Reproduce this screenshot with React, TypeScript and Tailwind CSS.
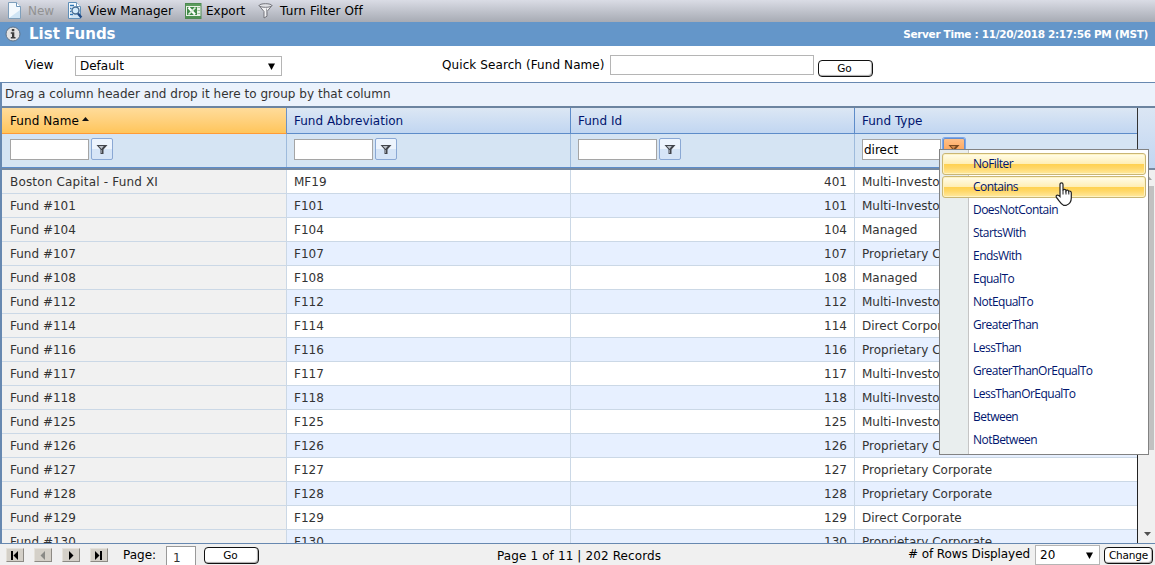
import type { ReactNode } from 'react';

const funds = [
  { name: 'Boston Capital - Fund XI', abbr: 'MF19', id: '401', type: 'Multi-Investor' },
  { name: 'Fund #101', abbr: 'F101', id: '101', type: 'Multi-Investor' },
  { name: 'Fund #104', abbr: 'F104', id: '104', type: 'Managed' },
  { name: 'Fund #107', abbr: 'F107', id: '107', type: 'Proprietary Corporate' },
  { name: 'Fund #108', abbr: 'F108', id: '108', type: 'Managed' },
  { name: 'Fund #112', abbr: 'F112', id: '112', type: 'Multi-Investor' },
  { name: 'Fund #114', abbr: 'F114', id: '114', type: 'Direct Corporate' },
  { name: 'Fund #116', abbr: 'F116', id: '116', type: 'Proprietary Corporate' },
  { name: 'Fund #117', abbr: 'F117', id: '117', type: 'Multi-Investor' },
  { name: 'Fund #118', abbr: 'F118', id: '118', type: 'Multi-Investor' },
  { name: 'Fund #125', abbr: 'F125', id: '125', type: 'Multi-Investor' },
  { name: 'Fund #126', abbr: 'F126', id: '126', type: 'Proprietary Corporate' },
  { name: 'Fund #127', abbr: 'F127', id: '127', type: 'Proprietary Corporate' },
  { name: 'Fund #128', abbr: 'F128', id: '128', type: 'Proprietary Corporate' },
  { name: 'Fund #129', abbr: 'F129', id: '129', type: 'Direct Corporate' },
  { name: 'Fund #130', abbr: 'F130', id: '130', type: 'Proprietary Corporate' },
];

const filterOptions = [
  'NoFilter',
  'Contains',
  'DoesNotContain',
  'StartsWith',
  'EndsWith',
  'EqualTo',
  'NotEqualTo',
  'GreaterThan',
  'LessThan',
  'GreaterThanOrEqualTo',
  'LessThanOrEqualTo',
  'Between',
  'NotBetween',
];

const columns = ['Fund Name', 'Fund Abbreviation', 'Fund Id', 'Fund Type'];
const gridCols = 'grid grid-cols-[285px_284px_284px_282px]';

function PageIcon({ search = false }: { search?: boolean }) {
  return (
    <svg width="16" height="17" viewBox="0 0 16 17" className="shrink-0">
      <path d="M1.500 .5h8l4 4v12h-12z" fill="#f4f9fd" stroke={search ? '#5f8fb8' : '#7f9fbb'} />
      <path d="M2 16h11V8z" fill="#cfe4f4" />
      <path d="M9.500.5v4h4" fill="#fff" stroke="#6f97ba" />
      {search && (
        <g>
          <path d="M3 3.500h4M3 6.500h1.500M3 9.500h1.500M3 12.500h3" stroke="#2f78b7" strokeWidth="1.300" />
          <circle cx="8.500" cy="8.500" r="3.500" fill="#d4ecfd" stroke="#4a6f94" strokeWidth="1.400" />
          <path d="M11 11.500l3.300 4" stroke="#1f4a86" strokeWidth="2.400" />
        </g>
      )}
    </svg>
  );
}

function ExcelIcon() {
  return (
    <svg width="17" height="16" viewBox="0 0 17 16" className="shrink-0">
      <rect x=".5" y=".5" width="15.500" height="15" fill="#e9f2e7" stroke="#4e8a52" />
      <path d="M12.500 4.500h2.500M12.500 7.500h2.500M12.500 10.500h2.500" stroke="#9cc39a" />
      <rect x="1" y="1" width="15" height="2" fill="#5c9c5e" />
      <path d="M2 4h10v8H2z" fill="#418a48" />
      <path d="M3.500 4.500l6.500 7" stroke="#fff" strokeWidth="2.400" />
      <path d="M10.500 4.500l-7 7" stroke="#d9ecd8" strokeWidth="1.700" />
      <path d="M1 14h15" stroke="#4f9154" strokeWidth="2" />
    </svg>
  );
}

function FunnelIcon() {
  return (
    <svg width="15" height="16" viewBox="0 0 15 16" className="shrink-0">
      <path d="M1 2.500L6 8.500V15l3-1.800V8.500l5-6z" fill="#f2f2f4" stroke="#74757c" />
      <ellipse cx="7.500" cy="2.500" rx="6.300" ry="1.800" fill="#e2e3e7" stroke="#74757c" />
      <path d="M8.500 5.500v7" stroke="#a4a5ab" />
    </svg>
  );
}

function FilterGlyph({ active = false }: { active?: boolean }) {
  return (
    <svg width="12" height="11" viewBox="0 0 12 11">
      <path d="M.5 1h11L7.500 5.500V10h-3V5.500z" fill={active ? '#7a4a20' : '#42454b'} />
      <path d="M2.800 2h5L5.500 5z" fill={active ? '#d58b4c' : '#bcc2ca'} />
      <path d="M5 6h1v3H5z" fill={active ? '#b9763d' : '#8d929a'} />
    </svg>
  );
}

function ToolItem({ icon, label, className }: { icon: ReactNode; label: string; className: string }) {
  return (
    <div className={`flex items-center ${className}`}>
      {icon}
      <span>{label}</span>
    </div>
  );
}

function PillButton({ label, className }: { label: string; className: string }) {
  return (
    <button
      className={`flex items-center justify-center rounded-[4px] border border-[#111] bg-white leading-none text-black shadow-[inset_-1px_-1px_1px_#aaa] ${className}`}
    >
      {label}
    </button>
  );
}

function PagerButton({ d, bar, disabled = false }: { d: string; bar?: string; disabled?: boolean }) {
  const color = disabled ? '#8a8a86' : '#000';
  return (
    <button className="flex h-[14px] w-[18px] items-center justify-center border border-[#e4e1da] border-r-[#8d8a84] border-b-[#8d8a84] bg-[#d4d0c8]">
      <svg width="12" height="9" viewBox="0 0 12 9">
        <path d={d} fill={color} />
        {bar && <path d={bar} fill={color} />}
      </svg>
    </button>
  );
}

function FilterMenu() {
  return (
    <div className="absolute top-[149px] left-[939px] h-[306px] w-[210px] border border-[#828282] bg-[linear-gradient(90deg,#e9eeee_0,#e9eeee_28px,#c5c5c5_28px,#c5c5c5_29px,#fff_29px)] pt-[3px] pr-[2px] pl-[2px] font-['Open_Sans','Noto_Sans',sans-serif] text-[12px] tracking-[-0.53px] text-[#00156e]">
      {filterOptions.map((option, i) => (
        <div
          key={option}
          className={`mb-px flex h-[22px] items-center rounded-[3px] border pl-[30px] leading-none ${
            i < 2
              ? 'border-[#c9b675] bg-[linear-gradient(#fffdec_0%,#ffeeb4_50%,#ffd150_50%,#ffd767_70%,#ffe9a0_100%)] shadow-[inset_0_0_0_1px_#fff3c1]'
              : 'border-transparent'
          }`}
        >
          {option}
        </div>
      ))}
      <svg width="18" height="25" viewBox="0 0 18 25" className="absolute top-[32px] left-[115px]">
        <path
          d="M5 14.500V2.500c0-2.300 3-2.300 3 0v6c.3-1.600 2.800-1.400 3 .3.500-1.200 2.600-.8 2.700.7.800-1 2.600-.3 2.600 1.300v5.200c0 3.300-1.600 6-5 7.300H8.500C5.800 22 4.400 19 1.500 15.500.3 13.600 2.400 11.800 5 14.500z"
          fill="#fff"
          stroke="#222"
          strokeWidth="1.200"
        />
        <path d="M8 8v4.500M11 9v3.500M13.800 10v2.500" stroke="#222" />
      </svg>
    </div>
  );
}

export default function App() {
  return (
    <div className="relative flex h-[565px] w-[1155px] flex-col overflow-hidden bg-white font-['DejaVu_Sans',Verdana,sans-serif] text-[12px] leading-[16px] text-[#333]">
      {/* Toolbar */}
      <div className="flex h-[22px] shrink-0 items-center bg-gradient-to-b from-[#dadce5] to-[#a7abb4] pb-px text-black">
        <ToolItem icon={<PageIcon />} label="New" className="w-[60px] gap-[5px] pl-[7px] text-[#929292]" />
        <ToolItem icon={<PageIcon search />} label="View Manager" className="w-[125px] gap-[5px] pl-[7px]" />
        <ToolItem icon={<ExcelIcon />} label="Export" className="w-[73px] gap-[4px]" />
        <ToolItem icon={<FunnelIcon />} label="Turn Filter Off" className="gap-[7px] tracking-[0.14px]" />
      </div>

      {/* Title bar */}
      <div className="flex h-6 shrink-0 items-center bg-[#6496c9] text-white">
        <svg width="16" height="16" viewBox="0 0 16 16" className="ml-[5px]">
          <circle cx="8" cy="8" r="7" fill="#e2e2e2" stroke="#5d7288" />
          <path d="M6.800 3h2.500v2.200H6.800zM5.800 6.300h3.500v4.700h1.200v1.500H5.800V11H7V7.700H5.800z" fill="#3c3c3c" />
        </svg>
        <h1 className="ml-2 text-[15px] font-bold">List Funds</h1>
        <span className="mr-[7px] ml-auto text-[10.5px] font-bold tracking-[-0.32px]">Server Time : 11/20/2018 2:17:56 PM (MST)</span>
      </div>

      {/* View and quick search */}
      <div className="flex h-9 shrink-0 items-start text-black">
        <span className="mt-[11px] ml-[25px] w-[50px]">View</span>
        <div className="mt-[10px] flex h-5 w-[207px] items-center justify-between border border-[#b5b5b5] pr-[6px] pl-1">
          <span>Default</span>
          <svg width="7" height="7" viewBox="0 0 7 7"><path d="M0 .5h7L3.500 7z" /></svg>
        </div>
        <span className="mt-[11px] ml-[160px] w-[168px] tracking-[0.09px]">Quick Search (Fund Name)</span>
        <div className="mt-[9px] h-5 w-[204px] border border-[#b5b5b5] bg-white" />
        <PillButton label="Go" className="mt-[14px] ml-[4px] h-[17px] w-[55px] pr-[2px] text-[10.5px]" />
      </div>

      {/* Grid */}
      <div className="flex h-[462px] shrink-0 flex-col border-t border-b border-l-2 border-[#6788b0]">
        <div className="h-[25px] shrink-0 border-b-2 border-[#6c84a0] bg-[#ebf2fc] pt-[3px] pl-[3px]">
          <span className="tracking-[0.03px]">Drag a column header and drop it here to group by that column</span>
        </div>
        <div className="flex h-[62px] shrink-0 border-b-2 border-[#7689a0] bg-gradient-to-b from-[#dbe6f4] to-[#c1d6f1]">
          <div className="w-[1136px] border-r border-[#333]">
            <div className={`${gridCols} h-[26px]`}>
              {columns.map((column, i) => (
                <div
                  key={column}
                  className={
                    i === 0
                      ? 'flex border-r border-b border-r-[#6c92c6] border-b-[#ff9b35] bg-gradient-to-b from-[#ffdc9a] to-[#ffc55a] pt-[5px] pl-2 tracking-[0.06px] text-black'
                      : 'border-r border-b border-[#5d8cc9] bg-gradient-to-b from-[#dce7f4] to-[#c1d6f1] pt-[5px] pl-[7px] text-[#00156e] last:border-r-0'
                  }
                >
                  {column}
                  {i === 0 && (
                    <svg width="7" height="4" viewBox="0 0 7 4" className="mt-[4px] ml-[3px]"><path d="M0 4L3.500 0L7 4z" fill="#111" /></svg>
                  )}
                </div>
              ))}
            </div>
            <div className={`${gridCols} h-[34px] border-b border-[#5d8cc9]`}>
              {columns.map((column, i) => (
                <div key={column} className={`flex gap-[2px] border-r border-[#9ebbdc] bg-[#d5e4f3] pt-[4px] last:border-r-0 ${i === 0 ? 'pl-2' : 'pl-[7px]'}`}>
                  <div className="mt-px h-[21px] w-[79px] border border-[#a5a5a5] bg-white pt-[2px] pl-px text-black">
                    {i === 3 ? 'direct' : ''}
                  </div>
                  <button
                    className={`flex h-[22px] w-[22px] items-center justify-center rounded-[2px] border ${
                      i === 3
                        ? 'border-[#648fd0] bg-gradient-to-b from-[#ffc087] to-[#ff9231] shadow-[0_0_0_1px_#7da7e8]'
                        : 'border-[#8aa8d4] bg-[linear-gradient(#edf4fd_50%,#d6e5f7_50%)]'
                    }`}
                  >
                    <FilterGlyph active={i === 3} />
                  </button>
                </div>
              ))}
            </div>
          </div>
        </div>

        <div className="flex h-[373px] shrink-0">
          <div className="w-[1136px] overflow-hidden border-r border-[#222]">
            {funds.map((fund, i) => (
              <div key={fund.name} className={`${gridCols} h-6 *:border-b *:border-[#cbd8e6] *:pt-[4px] ${i % 2 ? 'bg-[#e7f0ff]' : 'bg-white'}`}>
                <div className={`border-r bg-[#f1f1f1] pl-2 ${i === 0 ? 'tracking-[0.17px]' : ''}`}>{fund.name}</div>
                <div className="border-r pl-[7px]">{fund.abbr}</div>
                <div className="border-r pr-[7px] text-right">{fund.id}</div>
                <div className="pl-[7px]">{fund.type}</div>
              </div>
            ))}
          </div>
          <div className="flex flex-1 flex-col items-end bg-[#f0f0f0]">
            <div className="flex h-4 w-full items-center justify-center pl-[3px]">
              <svg width="7" height="4" viewBox="0 0 7 4"><path d="M0 4L3.500 0L7 4z" fill="#a3a3a3" /></svg>
            </div>
            <div className="mr-px h-[264px] w-[15px] bg-[#c1c1c1]" />
            <div className="mt-auto mb-[7px] flex w-full justify-center pl-px">
              <svg width="7" height="4" viewBox="0 0 7 4"><path d="M0 0h7L3.500 4z" fill="#505050" /></svg>
            </div>
          </div>
        </div>
      </div>

      {/* Pager */}
      <div className="flex h-[21px] shrink-0 items-start bg-[#f0f0f0] text-black">
        <div className="mt-[4px] ml-[6px] flex gap-[10px]">
          <PagerButton d="M9 0v9L4.500 4.500z" bar="M2 0h2v9H2z" />
          <PagerButton d="M8 0v9L3.500 4.500z" disabled />
          <PagerButton d="M4 0v9L8.500 4.500z" />
          <PagerButton d="M2 0v9L6.500 4.500z" bar="M7 0h2v9H7z" />
        </div>
        <span className="mt-[3px] ml-[15px] w-[43px]">Page:</span>
        <div className="mt-[2px] h-[24px] w-[30px] border border-[#999] bg-white pt-[3px] pl-[6px] text-[#333]">1</div>
        <PillButton label="Go" className="mt-[3px] ml-[8px] h-[17px] w-[55px] pr-[2px] text-[10.5px]" />
        <span className="mt-[4px] ml-[238px] w-[411px] tracking-[0.12px]">Page 1 of 11 | 202 Records</span>
        <span className="mt-[2px] w-[127px] tracking-[-0.08px]"># of Rows Displayed</span>
        <div className="mt-px flex h-5 w-[65px] items-center justify-between border border-[#b5b5b5] bg-white pr-[6px] pl-1">
          <span>20</span>
          <svg width="7" height="7" viewBox="0 0 7 7"><path d="M0 .5h7L3.500 7z" /></svg>
        </div>
        <PillButton label="Change" className="mt-[3px] ml-[4px] h-[17px] w-[49px] text-[10.5px] tracking-[-0.2px]" />
      </div>

      <FilterMenu />
    </div>
  );
}
